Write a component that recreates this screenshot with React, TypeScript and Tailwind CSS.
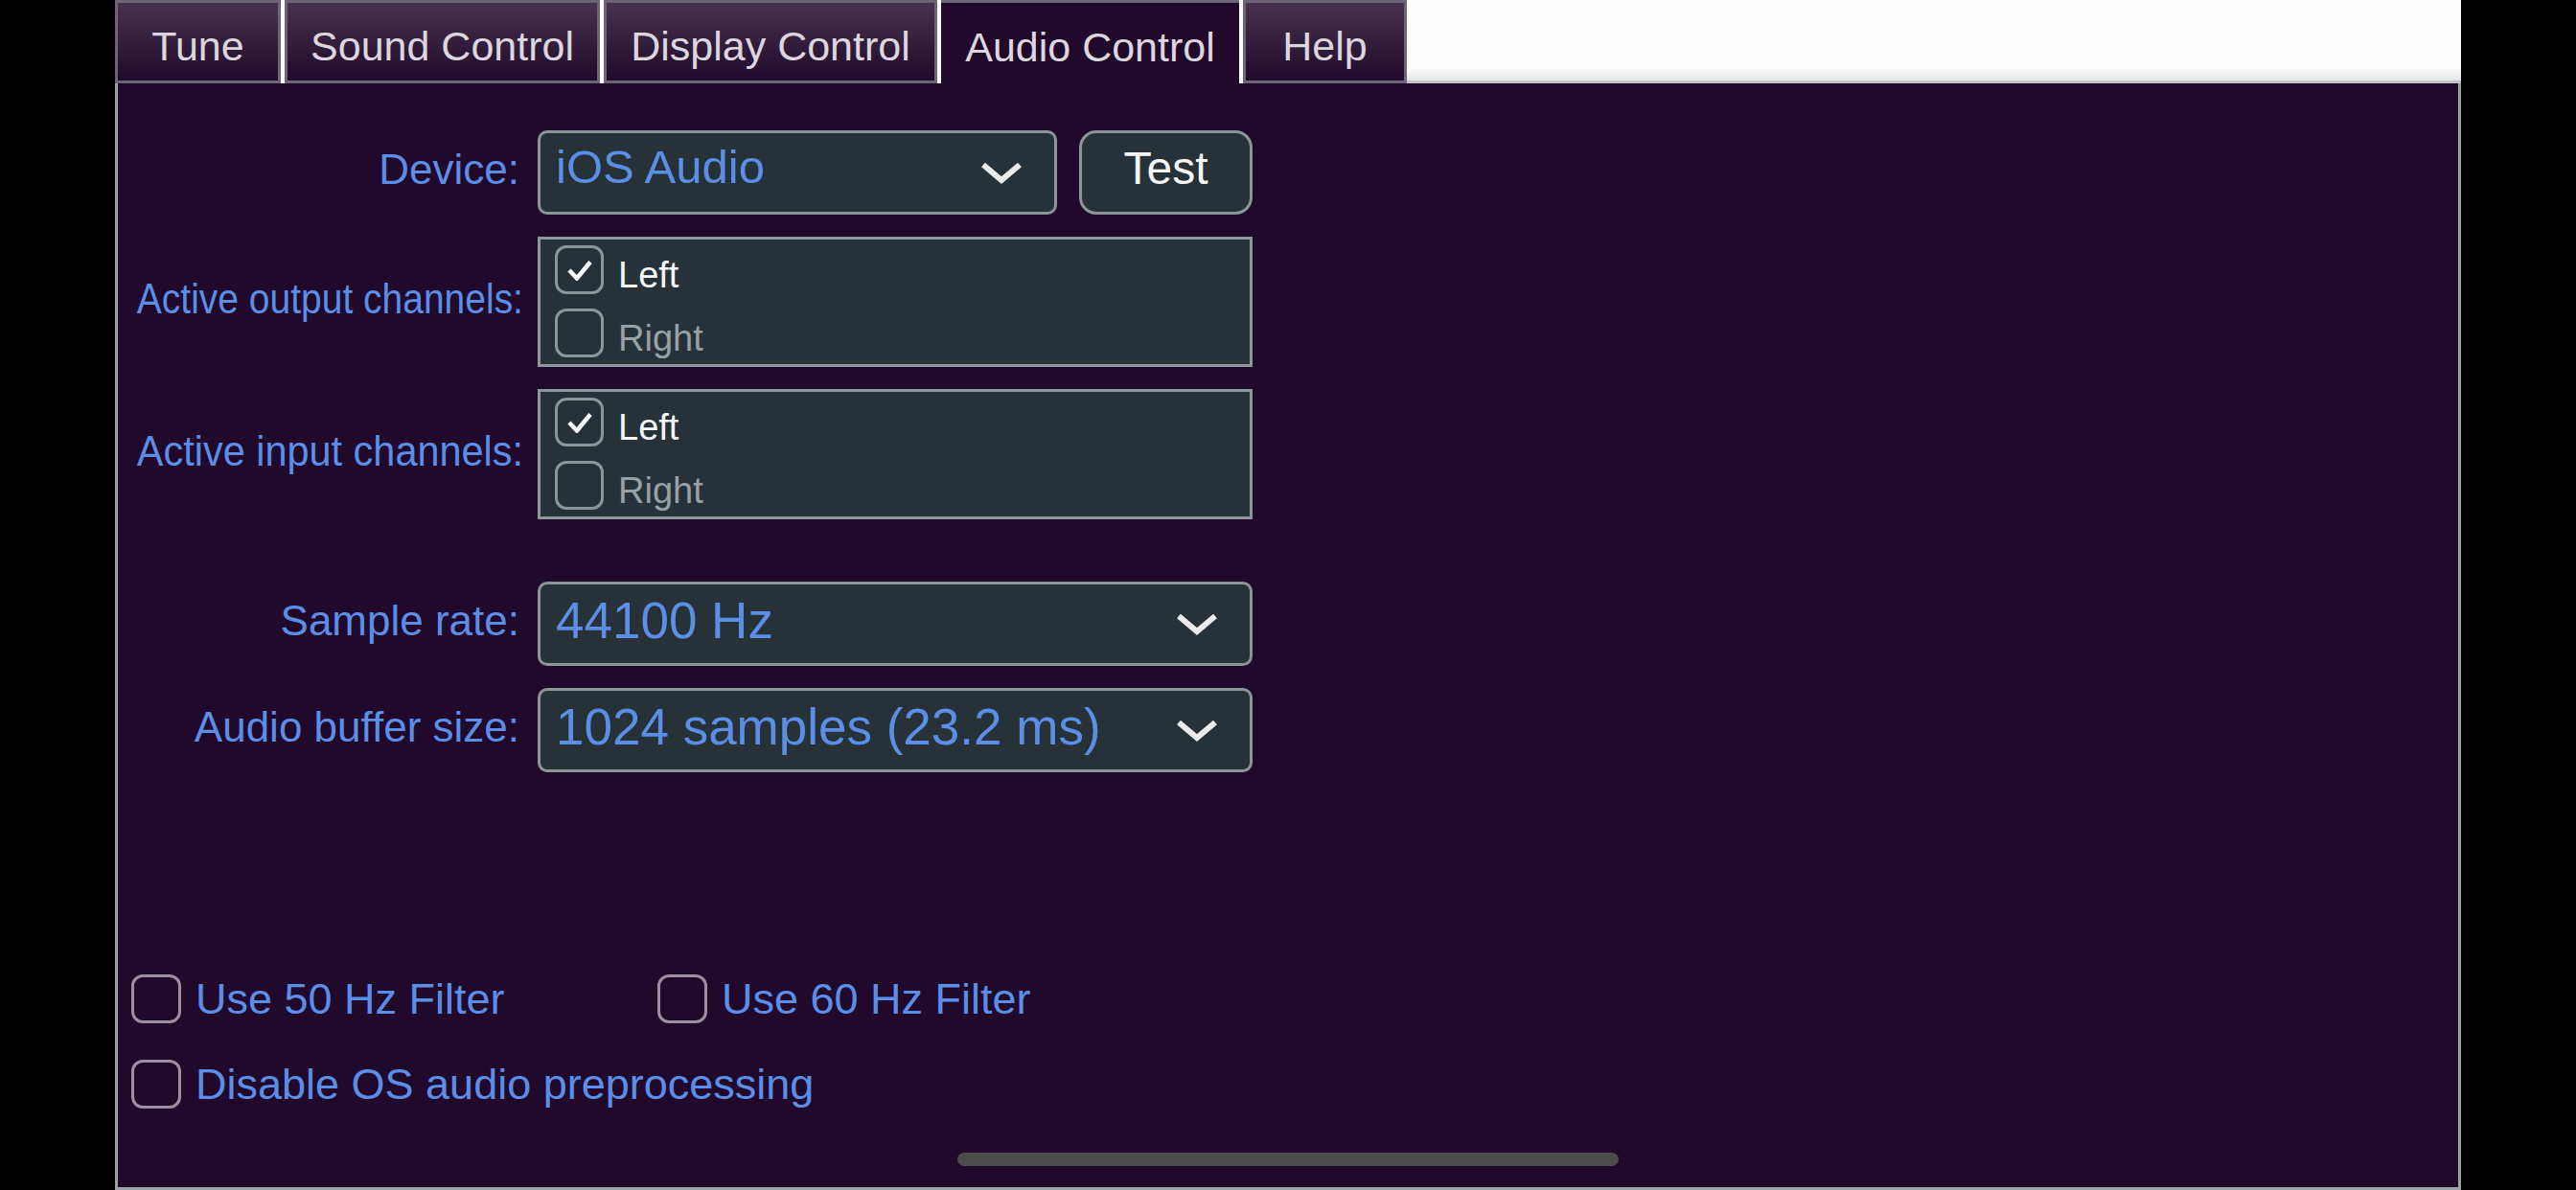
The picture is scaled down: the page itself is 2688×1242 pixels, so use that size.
import React from "react";

function Chevron() {
  return (
    <svg width="44" height="24" viewBox="0 0 44 24" className="shrink-0">
      <path d="M3 4 L22 20 L41 4" fill="none" stroke="#ebebeb" strokeWidth="6" strokeLinejoin="miter" />
    </svg>
  );
}

function Check() {
  return (
    <svg width="26" height="22" viewBox="0 0 26 22">
      <path d="M2 11 L10 19.5 L24 2.5" fill="none" stroke="#ffffff" strokeWidth="4.5" strokeLinejoin="miter" />
    </svg>
  );
}

function Label({ text, scale }: { text: string; scale?: "out" | "in" }) {
  const sc =
    scale === "out"
      ? "scale-x-[0.886] mr-[-4px]"
      : scale === "in"
        ? "scale-x-[0.942] mr-[-4px]"
        : "";
  return (
    <div className="w-[419px] shrink-0 flex justify-end items-center pb-[6px]">
      <span className={`shrink-0 whitespace-nowrap text-[44px] leading-none text-[#5b8ee6] origin-right ${sc}`}>
        {text}
      </span>
    </div>
  );
}

function Select({ value, wide, device }: { value: string; wide?: boolean; device?: boolean }) {
  return (
    <div
      className={`${wide ? "w-[746px]" : "w-[542px]"} h-[88px] ml-[19px] shrink-0 rounded-[10px] border-[3px] border-[#8c9598] bg-[#263238] flex items-center pl-[16px] pr-[33px]`}
    >
      <span
        className={`flex-1 whitespace-nowrap leading-none text-[#5b8ee6] ${device ? "text-[49px] pb-[12px]" : "text-[53px] pb-[7px]"}`}
      >
        {value}
      </span>
      <Chevron />
    </div>
  );
}

function BoxCheck({ label, checked }: { label: string; checked: boolean }) {
  return (
    <div className="flex items-center h-[51px]">
      <div className="w-[51px] h-[51px] rounded-[12px] border-[3px] border-[#8d9599] flex items-center justify-center">
        {checked && <Check />}
      </div>
      <span
        className={`ml-[15px] pt-[10px] text-[38px] leading-none ${checked ? "text-[#f6f6f6]" : "text-[#9aa1a5]"}`}
      >
        {label}
      </span>
    </div>
  );
}

function ChannelBox() {
  return (
    <div className="w-[746px] h-[136px] ml-[19px] shrink-0 border-[3px] border-[#8e979b] bg-[#263238] flex flex-col pl-[15px] pt-[6px] gap-[15px]">
      <BoxCheck label="Left" checked />
      <BoxCheck label="Right" checked={false} />
    </div>
  );
}

function FilterCheck({ label }: { label: string }) {
  return (
    <div className="flex items-center h-[51px]">
      <div className="w-[52px] h-[51px] rounded-[12px] border-[3px] border-[#9b8fa0]" />
      <span className="ml-[15px] text-[45px] leading-none text-[#5b8ee6] whitespace-nowrap">{label}</span>
    </div>
  );
}

function Tab({ label, w, active }: { label: string; w: string; active?: boolean }) {
  if (active) {
    return (
      <div
        className={`${w} h-[87px] shrink-0 border-t-[3px] border-[#6b6577] bg-[#21092c] text-[#dcd6df] flex items-center justify-center pt-[8px] text-[43px] leading-none whitespace-nowrap`}
      >
        {label}
      </div>
    );
  }
  return (
    <div
      className={`${w} h-[87px] shrink-0 border-[3px] border-[#6b6577] bg-linear-to-b from-[#47334f] to-[#200a2b] text-[#dcd6df] flex items-center justify-center pt-[9px] text-[43px] leading-none whitespace-nowrap`}
    >
      {label}
    </div>
  );
}

export default function App() {
  return (
    <div className="w-[2688px] h-[1242px] bg-black overflow-hidden font-['Liberation_Sans',Arial,sans-serif]">
      <div className="mx-auto w-[2448px] h-[1242px] flex flex-col">
        <div className="h-[87px] flex gap-[4px] bg-[#fdfdfd] shrink-0">
          <Tab label="Tune" w="w-[173px]" />
          <Tab label="Sound Control" w="w-[329px]" />
          <Tab label="Display Control" w="w-[348px]" />
          <Tab label="Audio Control" w="w-[311px]" active />
          <Tab label="Help" w="w-[171px]" />
          <div className="flex-1 -ml-[4px] h-[87px] border-b-[3px] border-[#c1c5c8] bg-linear-to-b from-[#fdfdfd] from-85% to-[#e2e4e5]" />
        </div>
        <div className="relative flex-1 bg-[#21092c] border-x-[3px] border-b-[3px] border-[#9aa3a5] flex flex-col pt-[49px]">
          <div className="flex items-center h-[88px]">
            <Label text="Device:" />
            <Select value="iOS Audio" device />
            <div className="ml-[23px] w-[181px] h-[88px] rounded-[18px] border-[3px] border-[#8c9598] bg-[#263238] flex items-center justify-center pb-[9px] text-[48px] leading-none text-[#f6f6f6]">
              Test
            </div>
          </div>
          <div className="mt-[23px] flex items-center h-[136px]">
            <Label text="Active output channels:" scale="out" />
            <ChannelBox />
          </div>
          <div className="mt-[23px] flex items-center h-[136px]">
            <Label text="Active input channels:" scale="in" />
            <ChannelBox />
          </div>
          <div className="mt-[65px] flex items-center h-[88px]">
            <Label text="Sample rate:" />
            <Select value="44100 Hz" wide />
          </div>
          <div className="mt-[23px] flex items-center h-[88px]">
            <Label text="Audio buffer size:" />
            <Select value="1024 samples (23.2 ms)" wide />
          </div>
          <div className="mt-[211px] pl-[14px] flex flex-col">
            <div className="flex">
              <div className="w-[549px]">
                <FilterCheck label="Use 50 Hz Filter" />
              </div>
              <FilterCheck label="Use 60 Hz Filter" />
            </div>
            <div className="mt-[38px]">
              <FilterCheck label="Disable OS audio preprocessing" />
            </div>
          </div>
          <div className="absolute bottom-[22px] left-1/2 -translate-x-1/2 w-[690px] h-[14px] rounded-full bg-[#4d4d4d]" />
        </div>
      </div>
    </div>
  );
}
